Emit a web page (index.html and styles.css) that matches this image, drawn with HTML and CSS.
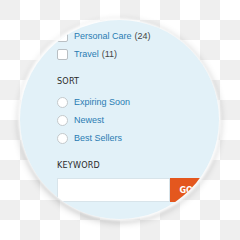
FILE: index.html
```html
<!DOCTYPE html>
<html>
<head>
<meta charset="utf-8">
<link rel="stylesheet" href="styles.css">
</head>
<body>
<div class="lens">
  <div class="content">
    <ul class="list">
      <li class="row"><span class="box"></span><span class="label">Personal Care</span><span class="count">(24)</span></li>
      <li class="row"><span class="box"></span><span class="label">Travel</span><span class="count">(11)</span></li>
    </ul>
    <h3 class="heading heading-sort">SORT</h3>
    <ul class="list">
      <li class="row"><span class="radio"></span><span class="label">Expiring Soon</span></li>
      <li class="row"><span class="radio"></span><span class="label">Newest</span></li>
      <li class="row"><span class="radio"></span><span class="label">Best Sellers</span></li>
    </ul>
    <h3 class="heading heading-keyword">KEYWORD</h3>
    <div class="search">
      <div class="input"></div>
      <div class="go">GO</div>
    </div>
  </div>
</div>
</body>
</html>
```
FILE: styles.css
```css
html, body {
  margin: 0;
  padding: 0;
}
body {
  width: 240px;
  height: 240px;
  background-color: #ffffff;
  background-image:
    linear-gradient(45deg, #efefef 25%, transparent 25%, transparent 75%, #efefef 75%),
    linear-gradient(45deg, #efefef 25%, transparent 25%, transparent 75%, #efefef 75%);
  background-size: 40px 40px;
  background-position: 20px 0, 0 20px;
  padding: 20px 0 0 20px;
  box-sizing: border-box;
  font-family: "Liberation Sans", Arial, sans-serif;
}
.lens {
  width: 199px;
  height: 199px;
  border-radius: 50%;
  background: #e2f1f8;
  overflow: hidden;
  box-shadow: -2px -2px 3px rgba(255,255,255,0.95), 2px 2px 3px rgba(255,255,255,0.95), 0 2px 8px rgba(0,0,0,0.3);
}
.content {
  padding: 7px 0 0 37px;
  width: 190px;
  box-sizing: border-box;
}
.list {
  list-style: none;
  margin: 0;
  padding: 0;
}
.row {
  height: 18px;
  display: flex;
  align-items: center;
  font-size: 9px;
}
.box {
  width: 9px;
  height: 9px;
  border: 1px solid #b9bfc3;
  border-radius: 2px;
  background: #fff;
  margin-right: 6px;
  flex: none;
}
.radio {
  width: 9px;
  height: 9px;
  border: 1px solid #c3c8cb;
  border-radius: 50%;
  background: #fff;
  margin-right: 6px;
  flex: none;
}
.label {
  color: #2a7cb3;
}
.count {
  color: #444;
  margin-left: 3px;
}
.heading {
  margin: 0;
  font-family: "DejaVu Sans", sans-serif;
  font-stretch: condensed;
  font-weight: normal;
  font-size: 9px;
  line-height: 12px;
  color: #2a2a2a;
  letter-spacing: 0.2px;
}
.heading-sort {
  margin: 12px 0 6px;
}
.heading-keyword {
  margin: 12px 0 7px;
}
.search {
  display: flex;
  height: 24px;
}
.input {
  width: 115px;
  background: #fff;
  border: 1px solid #d8e4ea;
  box-sizing: border-box;
}
.go {
  width: 40px;
  background: #e4571e;
  color: #fff;
  font-family: "DejaVu Sans", sans-serif;
  font-stretch: condensed;
  font-weight: bold;
  font-size: 9px;
  line-height: 24px;
  padding-left: 9px;
  box-sizing: border-box;
}
```
